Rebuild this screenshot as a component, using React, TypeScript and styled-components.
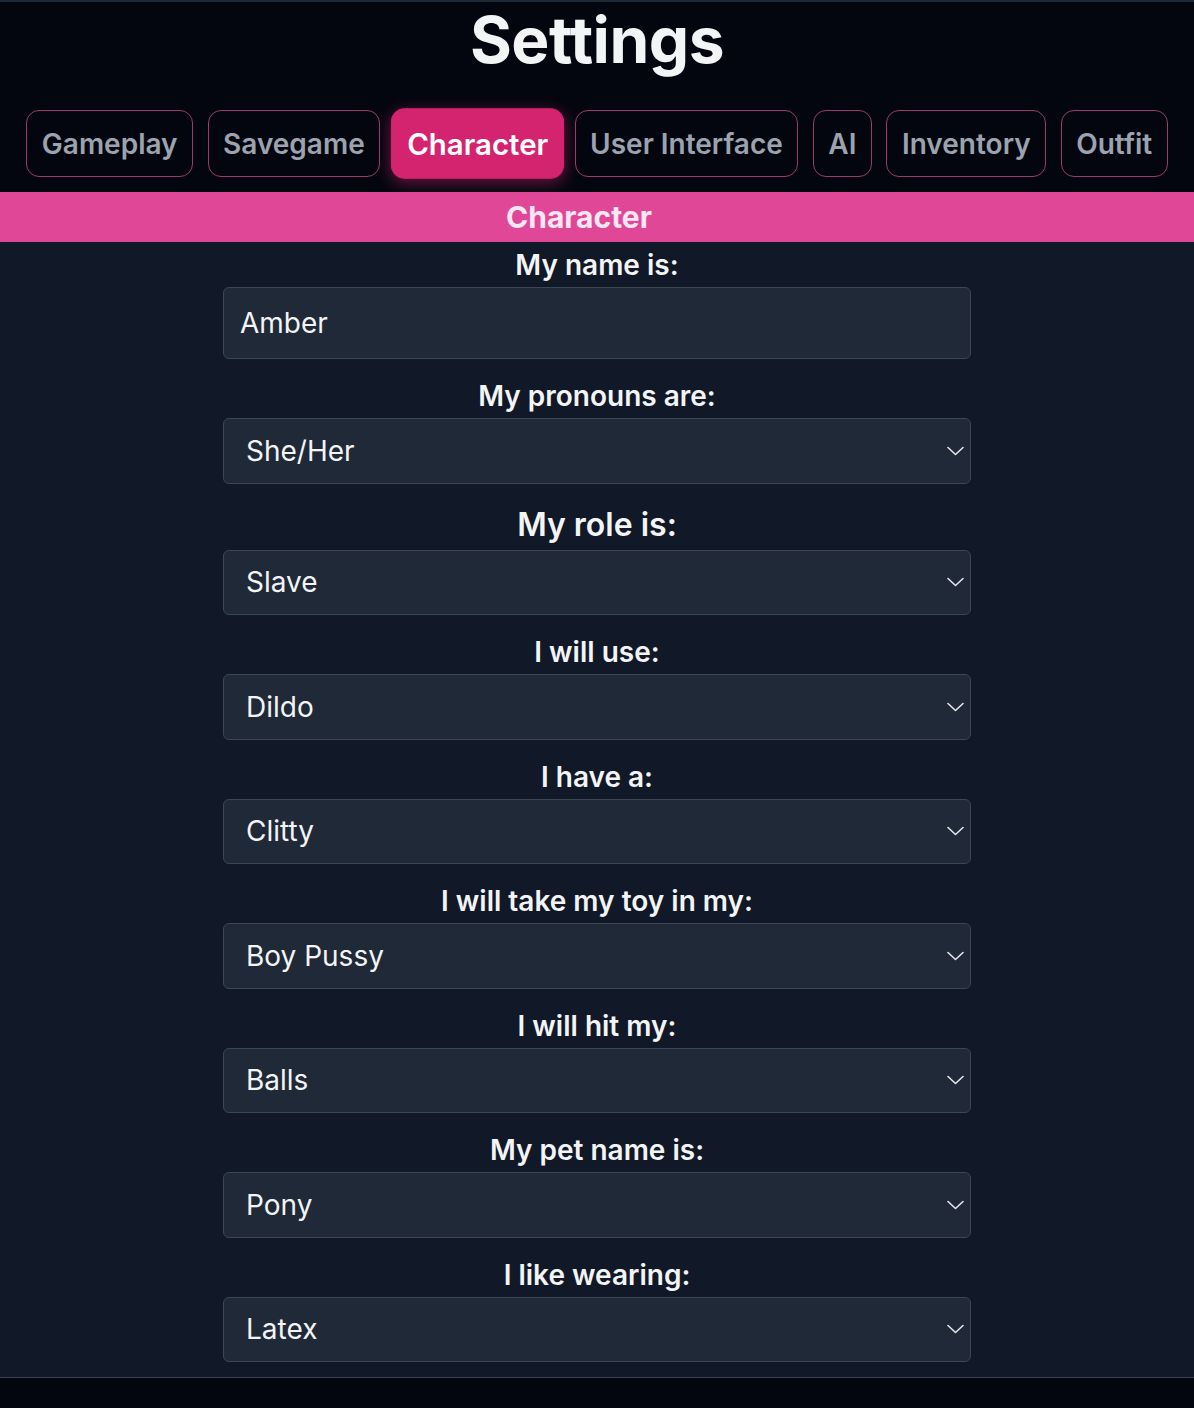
import * as React from "react"
import styled, { createGlobalStyle } from "styled-components"

const GlobalStyle = createGlobalStyle`
  html, body {
    margin: 0;
    padding: 0;
    background: #04060f;
    font-family: Inter, "Noto Sans", sans-serif;
    color: #f3f4f6;
  }
  * { box-sizing: border-box; }
`

const Page = styled.div`
  border-top: 2px solid #1f2937;
  background: #04060f;
  min-height: 1406px;
  display: flex;
  flex-direction: column;
`

const Title = styled.h1`
  margin: 0;
  text-align: center;
  font-size: 64px;
  line-height: 76px;
  font-weight: 700;
  color: #f3f4f6;
  letter-spacing: -0.5px;
`

const TabBar = styled.nav`
  display: flex;
  justify-content: center;
  gap: 14.5px;
  margin-top: 32px;
`

const Tab = styled.button<{ $active?: boolean }>`
  height: 67px;
  padding: 0 14.5px;
  border-radius: 13px;
  border: 1px solid ${p => (p.$active ? "#d4246f" : "#9a3a6e")};
  background: ${p => (p.$active ? "#d4246f" : "transparent")};
  color: ${p => (p.$active ? "#ffffff" : "#9ca3af")};
  font-family: inherit;
  font-size: 28px;
  font-weight: 600;
  cursor: pointer;
  transform: ${p => (p.$active ? "scale(1.05)" : "none")};
  box-shadow: ${p => (p.$active ? "0 4px 14px rgba(219, 39, 119, 0.45)" : "none")};
`

const Band = styled.div`
  margin-top: 15px;
  height: 50px;
  background: #e04897;
  color: #fce7f3;
  font-size: 30px;
  font-weight: 700;
  display: flex;
  align-items: center;
  justify-content: center;
  padding-right: 36px;
`

const Panel = styled.section`
  background: #111827;
  padding: 5px 0 15px;
  display: flex;
  flex-direction: column;
  align-items: center;
  border-bottom: 1px solid #374151;
`

const Field = styled.div`
  width: 748px;
  display: flex;
  flex-direction: column;
  & + & {
    margin-top: 19px;
  }
`

const Label = styled.label<{ $big?: boolean }>`
  text-align: center;
  font-size: ${p => (p.$big ? "32px" : "28px")};
  line-height: ${p => (p.$big ? "43px" : "36px")};
  font-weight: 600;
  color: #f3f4f6;
  margin-bottom: 4px;
`

const TextInput = styled.input`
  height: 72px;
  width: 100%;
  padding: 0 16px;
  background: #1f2937;
  border: 1px solid #3d4654;
  border-radius: 6px;
  color: #f3f4f6;
  font-family: inherit;
  font-size: 28px;
  outline: none;
`

const SelectWrap = styled.div`
  position: relative;
  height: 65.5px;
`

const Select = styled.select`
  appearance: none;
  -webkit-appearance: none;
  height: 100%;
  width: 100%;
  padding: 0 40px 0 22px;
  background: #1f2937;
  border: 1px solid #3d4654;
  border-radius: 6px;
  color: #f3f4f6;
  font-family: inherit;
  font-size: 28px;
  outline: none;
`

const Chevron = styled.svg`
  position: absolute;
  right: 7px;
  top: 50%;
  margin-top: -5px;
  pointer-events: none;
`

const Footer = styled.div`
  flex: 1;
  background: #04060f;
`

const tabs = ["Gameplay", "Savegame", "Character", "User Interface", "AI", "Inventory", "Outfit"]

const selects: { label: string; value: string; big?: boolean }[] = [
  { label: "My pronouns are:", value: "She/Her" },
  { label: "My role is:", value: "Slave", big: true },
  { label: "I will use:", value: "Dildo" },
  { label: "I have a:", value: "Clitty" },
  { label: "I will take my toy in my:", value: "Boy Pussy" },
  { label: "I will hit my:", value: "Balls" },
  { label: "My pet name is:", value: "Pony" },
  { label: "I like wearing:", value: "Latex" },
]

const DropDown = ({ value }: { value: string }) => (
  <SelectWrap>
    <Select defaultValue={value}>
      <option>{value}</option>
    </Select>
    <Chevron width="17" height="10" viewBox="0 0 17 10">
      <path d="M1 1.5 L8.5 8.5 L16 1.5" fill="none" stroke="#e5e7eb" strokeWidth="1.6" strokeLinecap="round" strokeLinejoin="round" />
    </Chevron>
  </SelectWrap>
)

export default function App() {
  return (
    <>
      <GlobalStyle />
      <Page>
        <Title>Settings</Title>
        <TabBar>
          {tabs.map(t => (
            <Tab key={t} $active={t === "Character"}>{t}</Tab>
          ))}
        </TabBar>
        <Band>Character</Band>
        <Panel>
          <Field>
            <Label>My name is:</Label>
            <TextInput defaultValue="Amber" />
          </Field>
          {selects.map(s => (
            <Field key={s.label}>
              <Label $big={s.big}>{s.label}</Label>
              <DropDown value={s.value} />
            </Field>
          ))}
        </Panel>
        <Footer />
      </Page>
    </>
  )
}
